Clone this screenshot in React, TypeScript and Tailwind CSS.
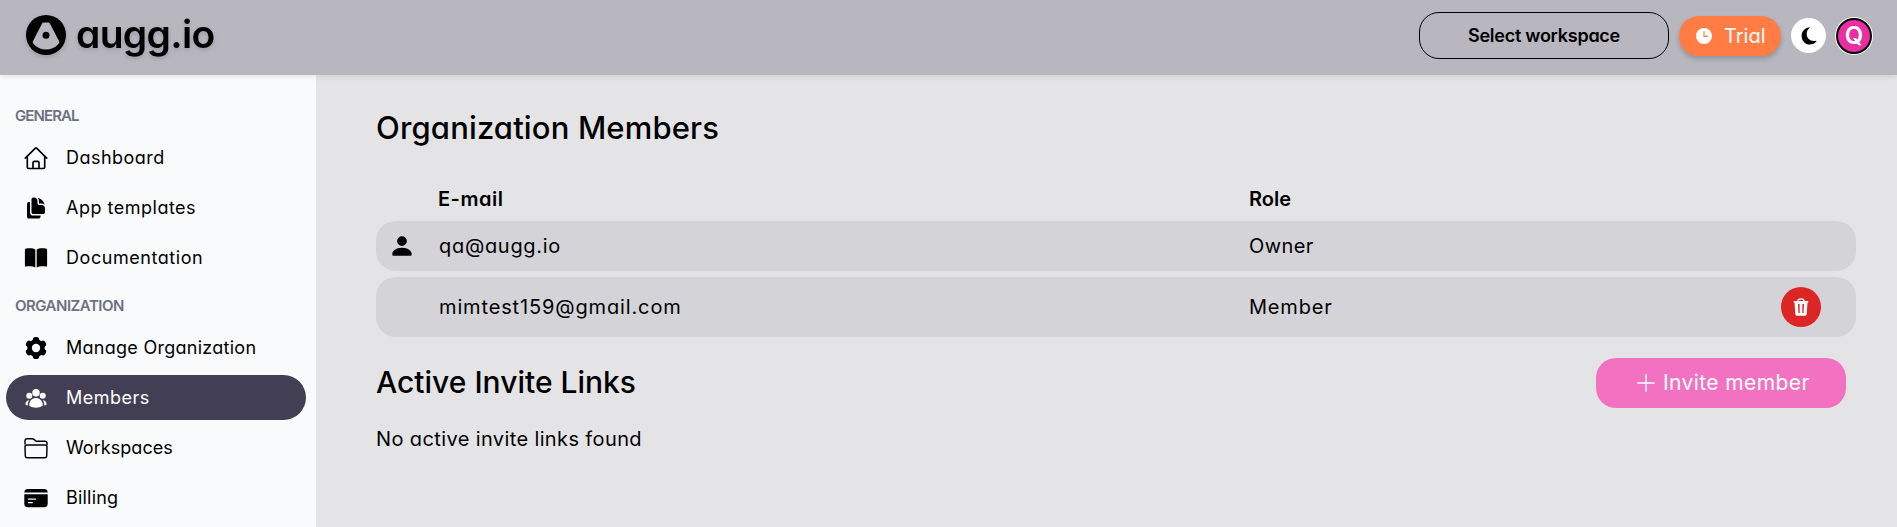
import type { ReactNode } from "react";
import { HiDocumentDuplicate, HiUserGroup } from "react-icons/hi2";
import { BsPersonFill } from "react-icons/bs";

function LogoMark() {
  return (
    <svg viewBox="0 0 40 40" className="size-10">
      <circle cx="20" cy="20" r="20" fill="#000" />
      <path d="M17.6 7.5h4.8c.7 0 1.2.3 1.5.9l9.2 17.8c.4.8.3 1.5-.3 2.2C29.500 32.500 25 34.500 20 34.500S10.500 32.500 7.200 28.400c-.6-.7-.7-1.400-.3-2.200l9.200-17.800c.3-.6.8-.9 1.500-.9z" fill="#b8b6bf" />
      <circle cx="20" cy="20.300" r="3.500" fill="#000" />
    </svg>
  );
}

function HomeIcon() {
  return (
    <svg viewBox="0 0 24 24" className="size-6" fill="none" stroke="currentColor" strokeWidth="1.650" strokeLinecap="round" strokeLinejoin="round">
      <path d="M1.300 12.200 11.400 2.100a.9.900 0 0 1 1.200 0L22.700 12.200" />
      <path d="M3.300 10.500v10.700c0 .8.500 1.300 1.300 1.300h14.800c.8 0 1.300-.5 1.300-1.300V10.500" />
      <path d="M9 22.300v-5.600c0-.8.500-1.300 1.300-1.300h3.400c.8 0 1.300.5 1.300 1.300v5.600" />
    </svg>
  );
}

function BookIcon() {
  return (
    <svg viewBox="0 0 24 24" className="size-6" fill="currentColor">
      <path d="M11.300 3.600C9.500 2.300 6 1.900 1.500 2.700a.8.800 0 0 0-.6.800v16.400c0 .5.400.8.900.7 4-.7 7.200-.4 9.500 1z" />
      <path d="M12.700 3.600c1.800-1.300 5.300-1.700 9.800-.9.400.1.600.4.600.8v16.400c0 .5-.4.800-.9.700-4-.7-7.200-.4-9.500 1z" />
    </svg>
  );
}

function GearIcon() {
  return (
    <svg viewBox="0 0 24 24" className="size-6">
      <g fill="currentColor">
        <circle cx="12" cy="12" r="8.700" />
        <rect x="8.800" y="1" width="6.400" height="22" rx="2.800" />
        <rect x="8.800" y="1" width="6.400" height="22" rx="2.800" transform="rotate(60 12 12)" />
        <rect x="8.800" y="1" width="6.400" height="22" rx="2.800" transform="rotate(120 12 12)" />
      </g>
      <circle cx="12" cy="12" r="4.200" fill="#f9fafc" />
    </svg>
  );
}

function FolderIcon() {
  return (
    <svg viewBox="0 0 24 24" className="size-6" fill="none" stroke="currentColor" strokeWidth="1.450" strokeLinejoin="round">
      <path d="M1 8.500V4.700c0-1.300.8-2 2-2h5.200c.8 0 1.300.2 1.800.7l1.400 1.300c.4.400.9.500 1.500.5H21c1.200 0 2 .8 2 2v1.700" />
      <path d="M3 9h18c1.200 0 2 .8 2 2l-.3 8.700c0 1.200-.9 2-2.100 2H3.400c-1.200 0-2.100-.8-2.100-2L1 11c0-1.200.8-2 2-2z" />
    </svg>
  );
}

function CardIcon() {
  return (
    <svg viewBox="0 0 24 24" className="size-6" fill="currentColor">
      <path d="M.3 6.500C.3 4.200 1.500 3 3.700 3h16.600c2.200 0 3.400 1.200 3.400 3.500z" />
      <path fillRule="evenodd" d="M.3 8.200h23.400v9.600c0 2.300-1.200 3.500-3.400 3.500H3.700c-2.200 0-3.400-1.200-3.400-3.500zM4 12.400v1.400h8v-1.400zM4 15.900v1.400h4.800v-1.400z" />
    </svg>
  );
}

function ClockIcon() {
  return (
    <svg viewBox="0 0 16 16" className="size-4">
      <circle cx="8" cy="8" r="8" fill="#fff" />
      <path d="M8 3.300V8.300h4" fill="none" stroke="#ff7d45" strokeWidth="1.200" />
    </svg>
  );
}

function MoonIcon() {
  return (
    <svg viewBox="0 0 16 18" className="h-[18px] w-4">
      <path d="M8.200.3C3.800 1 .6 4.600.6 9c0 4.800 3.700 8.600 8.300 8.600 2.800 0 5.300-1.300 6.600-3.300.2-.4-.1-.7-.5-.6-5.300 1.100-9.300-2.100-9.300-6.700 0-2.400 1-4.600 2.700-6 .4-.3.200-.8-.2-.7z" fill="#000" />
    </svg>
  );
}

function TrashIcon() {
  return (
    <svg viewBox="0 0 16 18" className="h-[18px] w-4">
      <path d="M4.800 3.200C4.800 1.500 6.200.8 8 .8s3.200.7 3.200 2.400" fill="none" stroke="#fff" strokeWidth="1.200" />
      <path fillRule="evenodd" d="M.8 3h14.400v1.700h-.7l-.8 11.300c-.1 1.200-.8 1.800-1.900 1.800H4.200c-1.100 0-1.800-.6-1.900-1.800L1.500 4.700H.8zM5 6l.4 8.900h1.300L6.600 6zm4.400 0-.1 8.900h1.300L11 6z" fill="#fff" />
    </svg>
  );
}

function PlusIcon() {
  return (
    <svg viewBox="0 0 18 18" className="size-[18px]">
      <path d="M9 .8v16.400M.8 9h16.400" stroke="#fff" strokeWidth="1.400" strokeLinecap="round" />
    </svg>
  );
}

function NavItem({ icon, active, children }: { icon: ReactNode; active?: boolean; children: ReactNode }) {
  return (
    <a className={`flex h-[45px] w-[300px] items-center gap-[18px] rounded-full pl-[18px] text-[18px] ${active ? "bg-[#423f55] text-white" : "text-black"}`}>
      {icon}
      {children}
    </a>
  );
}

export default function App() {
  return (
    <div className="flex h-[527px] flex-col overflow-hidden bg-[#e4e4e6] font-['Inter',sans-serif] text-black [font-feature-settings:'cv11']">
      <header className="z-10 flex h-[75px] shrink-0 items-center justify-between bg-[#b8b6bf] pr-6 pl-[26px] shadow-[0_1px_6px_rgba(0,0,0,0.1)]">
        <div className="flex items-center gap-[10px] pb-[5px] drop-shadow-[0_2px_2px_rgba(0,0,0,0.15)]">
          <LogoMark />
          <span className="-mt-[3px] text-[39px] leading-10 font-semibold tracking-[-0.7px]">augg.io</span>
        </div>
        <div className="flex items-center pb-[4px]">
          <button className="mr-[10px] h-[47px] w-[250px] rounded-[20px] border border-black text-[18px] font-semibold tracking-[-0.25px]">Select workspace</button>
          <button className="mr-[10px] flex h-10 w-[102px] items-center gap-[12px] rounded-full bg-[#ff7d45] pl-[17px] text-[20px] text-white shadow-[0_3px_5px_rgba(0,0,0,0.2)]">
            <ClockIcon />
            <span>Trial</span>
          </button>
          <button className="mr-[9px] flex size-[35px] items-center justify-center rounded-full bg-white">
            <MoonIcon />
          </button>
          <div className="flex size-[38px] items-center justify-center rounded-full bg-white p-px">
            <div className="flex size-full items-center justify-center rounded-full border-2 border-black bg-[#e92da2] text-[24px] leading-none font-semibold text-white">Q</div>
          </div>
        </div>
      </header>
      <div className="flex min-h-0 flex-1">
        <aside className="flex w-[316px] shrink-0 flex-col bg-[#f9fafc] pl-[6px]">
          <h3 className="mt-[31px] mb-[9px] pl-[9px] text-[15px] leading-5 font-semibold tracking-[-0.9px] text-gray-500">GENERAL</h3>
          <nav className="flex flex-col gap-[5px]">
            <NavItem icon={<HomeIcon />}><span className="tracking-[0.48px]">Dashboard</span></NavItem>
            <NavItem icon={<HiDocumentDuplicate className="size-6" />}><span className="tracking-[0.5px]">App templates</span></NavItem>
            <NavItem icon={<BookIcon />}><span className="tracking-[0.55px]">Documentation</span></NavItem>
          </nav>
          <h3 className="mt-[16px] mb-[9px] pl-[9px] text-[15px] leading-5 font-semibold tracking-[-0.5px] text-gray-500">ORGANIZATION</h3>
          <nav className="flex flex-col gap-[5px]">
            <NavItem icon={<GearIcon />}><span className="tracking-[0.27px]">Manage Organization</span></NavItem>
            <NavItem icon={<HiUserGroup className="size-6" />} active><span className="tracking-[0.5px]">Members</span></NavItem>
            <NavItem icon={<FolderIcon />}><span className="tracking-[0.05px]">Workspaces</span></NavItem>
            <NavItem icon={<CardIcon />}><span className="tracking-[0.2px]">Billing</span></NavItem>
          </nav>
        </aside>
        <main className="flex-1 pr-[41px] pl-[60px]">
          <h1 className="mt-[33px] text-[31px] leading-10 font-medium tracking-[0.15px]">Organization Members</h1>
          <div className="mt-[35px] flex h-[32px] items-center pl-[62px] text-[20px] font-semibold">
            <div className="w-[811px] tracking-[0.5px]">E-mail</div>
            <div>Role</div>
          </div>
          <div className="mt-[6px] flex h-[50px] items-center rounded-[20px] bg-[#d4d3d8] text-[20px]">
            <div className="w-[62px] pl-[13px]"><BsPersonFill className="size-[26px]" /></div>
            <div className="w-[811px] pl-px tracking-[0.7px]">qa@augg.io</div>
            <div className="tracking-[0.4px]">Owner</div>
          </div>
          <div className="mt-[6px] flex h-[60px] items-center rounded-[20px] bg-[#d4d3d8] pr-[35px] pl-[62px] text-[20px]">
            <div className="w-[811px] pl-px tracking-[0.86px]">mimtest159@gmail.com</div>
            <div className="tracking-[0.8px]">Member</div>
            <button className="ml-auto flex size-10 items-center justify-center rounded-full bg-[#dc2626]"><TrashIcon /></button>
          </div>
          <div className="mt-[21px] flex items-center justify-between pr-[10px]">
            <h2 className="pb-[2px] text-[30px] font-medium">Active Invite Links</h2>
            <button className="flex h-[50px] w-[250px] items-center gap-2 rounded-[20px] bg-[#f272c1] pl-[41px] text-[21px] text-white">
              <PlusIcon />
              <span className="tracking-[0.4px]">Invite member</span>
            </button>
          </div>
          <p className="mt-[16px] text-[20px] leading-[30px] tracking-[0.38px]">No active invite links found</p>
        </main>
      </div>
    </div>
  );
}
